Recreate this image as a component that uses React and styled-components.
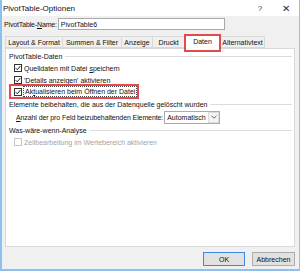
import React from "react";
import styled, { createGlobalStyle } from "styled-components";

const Global = createGlobalStyle`
  html, body { margin: 0; padding: 0; background: #fff; }
  body { font-family: "Liberation Sans", Arial, sans-serif; font-size: 7px; color: #111; }
  * { box-sizing: border-box; }
`;

const Window = styled.div`
  width: 300px;
  height: 271px;
  background: #f0f0f0;
  border: 1px solid #8cc0ee;
  border-top: none;
  border-left-width: 2px;
  border-bottom-width: 2px;
  display: flex;
  flex-direction: column;
`;

const TitleBar = styled.div`
  height: 16px;
  flex: none;
  background: #fff;
  display: flex;
  align-items: center;
  padding-left: 1px;
  font-size: 8px;
  color: #111;
`;

const Title = styled.div`
  flex: 1;
`;

const TitleBtn = styled.div`
  width: 26px;
  text-align: center;
  font-size: ${(p) => p.$size}px;
  color: #333;
`;

const Body = styled.div`
  flex: 1;
  display: flex;
  flex-direction: column;
  padding: 2px 4px 3px 3px;
`;

const NameRow = styled.div`
  display: flex;
  align-items: center;
  height: 12px;
  margin-bottom: 6px;
`;

const Label = styled.span`
  margin-left: -1px;
  margin-right: 1px;
  letter-spacing: -0.15px;
  white-space: nowrap;
`;

const U = styled.span`
  text-decoration: underline;
`;

const Input = styled.div`
  width: 167px;
  height: 12px;
  background: #fff;
  border: 1px solid #a9a9a9;
  padding: 0 2px;
  display: flex;
  align-items: center;
`;

const Tabs = styled.div`
  display: flex;
  align-items: flex-end;
  height: 12px;
  position: relative;
  z-index: 1;
`;

const Tab = styled.div`
  position: relative;
  flex: none;
  height: ${(p) => (p.$active ? 15 : 12)}px;
  width: ${(p) => p.$w}px;
  margin-bottom: ${(p) => (p.$active ? -1 : 0)}px;
  margin-left: ${(p) => (p.$first ? 0 : -1)}px;
  display: flex;
  align-items: center;
  justify-content: center;
  padding-bottom: ${(p) => (p.$active ? 1 : 0)}px;
  background: ${(p) => (p.$active ? "#fff" : "#f0f0f0")};
  border: 1px solid #d9d9d9;
  border-bottom: ${(p) => (p.$active ? "none" : "1px solid #d9d9d9")};
  white-space: nowrap;
  z-index: ${(p) => (p.$active ? 2 : 0)};
  &::after {
    content: "";
    display: ${(p) => (p.$highlight ? "block" : "none")};
    position: absolute;
    left: -1px;
    right: -1px;
    top: -1px;
    bottom: -3px;
    border: 2px solid #e24a4d;
  }
`;

const Panel = styled.div`
  height: 199px;
  flex: none;
  background: #fff;
  border: 1px solid #d9d9d9;
  padding: 1px 2px 0 3px;
  display: flex;
  flex-direction: column;
`;

const GroupHead = styled.div`
  display: flex;
  align-items: center;
  height: ${(p) => p.$h || 12}px;
  gap: 3px;
  white-space: nowrap;
  &::after {
    content: "";
    flex: 1;
    height: 1px;
    background: #dcdcdc;
  }
`;

const CheckRow = styled.div`
  display: flex;
  align-items: center;
  height: ${(p) => (p.$boxed ? 11 : 12)}px;
  padding-left: ${(p) => (p.$boxed ? 3 : 5)}px;
  gap: 2px;
  white-space: nowrap;
  color: ${(p) => (p.$disabled ? "#a3a3a3" : "inherit")};
`;

const Highlight = styled.div`
  align-self: flex-start;
  border: 2px solid #e24a4d;
  margin-top: -2px;
  padding-right: 1px;
  height: 15px;
  display: flex;
  align-items: center;
`;

const Box = styled.span`
  width: 8px;
  height: 8px;
  flex: none;
  border: 1px solid ${(p) => (p.$disabled ? "#c6c6c6" : "#333")};
  background: #fff;
  display: inline-flex;
  align-items: center;
  justify-content: center;
`;

const Focus = styled.span`
  outline: 1px dotted #444;
  padding: 0 1px;
  line-height: 9px;
`;

const SelectRow = styled.div`
  display: flex;
  align-items: center;
  height: 16px;
  padding-left: 7px;
  gap: 1px;
  white-space: nowrap;
`;

const SelectLabel = styled.span`
  letter-spacing: -0.1px;
`;

const Select = styled.div`
  width: 56px;
  height: 13px;
  border: 1px solid #ababab;
  background: #fff;
  display: flex;
  align-items: stretch;
`;

const SelectText = styled.div`
  flex: 1;
  padding-left: 2px;
  overflow: hidden;
  display: flex;
  align-items: center;
`;

const Arrow = styled.div`
  width: 11px;
  flex: none;
  border: 1px solid #dcdcdc;
  background: #f4f4f4;
  display: flex;
  align-items: center;
  justify-content: center;
`;

const Footer = styled.div`
  display: flex;
  justify-content: flex-end;
  gap: 7px;
  margin-top: 5px;
`;

const Button = styled.div`
  width: ${(p) => p.$w}px;
  height: 14px;
  background: #e1e1e1;
  border: 1px solid ${(p) => (p.$default ? "#3c8ae0" : "#adadad")};
  display: flex;
  align-items: center;
  justify-content: center;
`;

const Check = () => (
  <svg width="6" height="6" viewBox="0 0 6 6">
    <path d="M0.6 3.1 L2.3 4.8 L5.4 1" fill="none" stroke="#222" strokeWidth="1" />
  </svg>
);

export default function App() {
  return (
    <>
      <Global />
      <Window>
        <TitleBar>
          <Title>PivotTable-Optionen</Title>
          <TitleBtn $size={8}>?</TitleBtn>
          <TitleBtn $size={10}>✕</TitleBtn>
        </TitleBar>
        <Body>
          <NameRow>
            <Label>
              PivotTable-<U>N</U>ame:
            </Label>
            <Input>PivotTable6</Input>
          </NameRow>
          <Tabs>
            <Tab $w={58} $first>Layout &amp; Format</Tab>
            <Tab $w={60}>Summen &amp; Filter</Tab>
            <Tab $w={32}>Anzeige</Tab>
            <Tab $w={33}>Druckt</Tab>
            <Tab $w={37} $active $highlight>Daten</Tab>
            <Tab $w={45}>Alternativtext</Tab>
          </Tabs>
          <Panel>
            <GroupHead>PivotTable-Daten</GroupHead>
            <CheckRow>
              <Box><Check /></Box>
              <span>Quelldaten mit Datei <U>s</U>peichern</span>
            </CheckRow>
            <CheckRow>
              <Box><Check /></Box>
              <span>'D<U>e</U>tails anzeigen' aktivieren</span>
            </CheckRow>
            <Highlight>
              <CheckRow $boxed>
                <Box><Check /></Box>
                <Focus>Ak<U>t</U>ualisieren beim Öffnen der Datei</Focus>
              </CheckRow>
            </Highlight>
            <GroupHead $h={10}>Elemente beibehalten, die aus der Datenquelle gelöscht wurden</GroupHead>
            <SelectRow>
              <SelectLabel><U>A</U>nzahl der pro Feld beizubehaltenden Elemente:</SelectLabel>
              <Select>
                <SelectText>Automatisch</SelectText>
                <Arrow>
                  <svg width="6" height="4" viewBox="0 0 6 4">
                    <path d="M0.5 0.8 L3 3.2 L5.5 0.8" fill="none" stroke="#555" strokeWidth="0.9" />
                  </svg>
                </Arrow>
              </Select>
            </SelectRow>
            <GroupHead $h={11}>Was-wäre-wenn-Analyse</GroupHead>
            <CheckRow $disabled>
              <Box $disabled />
              <span>Zellbearbeitung im Wertebereich aktivieren</span>
            </CheckRow>
          </Panel>
          <Footer>
            <Button $w={42} $default>OK</Button>
            <Button $w={43}>Abbrechen</Button>
          </Footer>
        </Body>
      </Window>
    </>
  );
}
